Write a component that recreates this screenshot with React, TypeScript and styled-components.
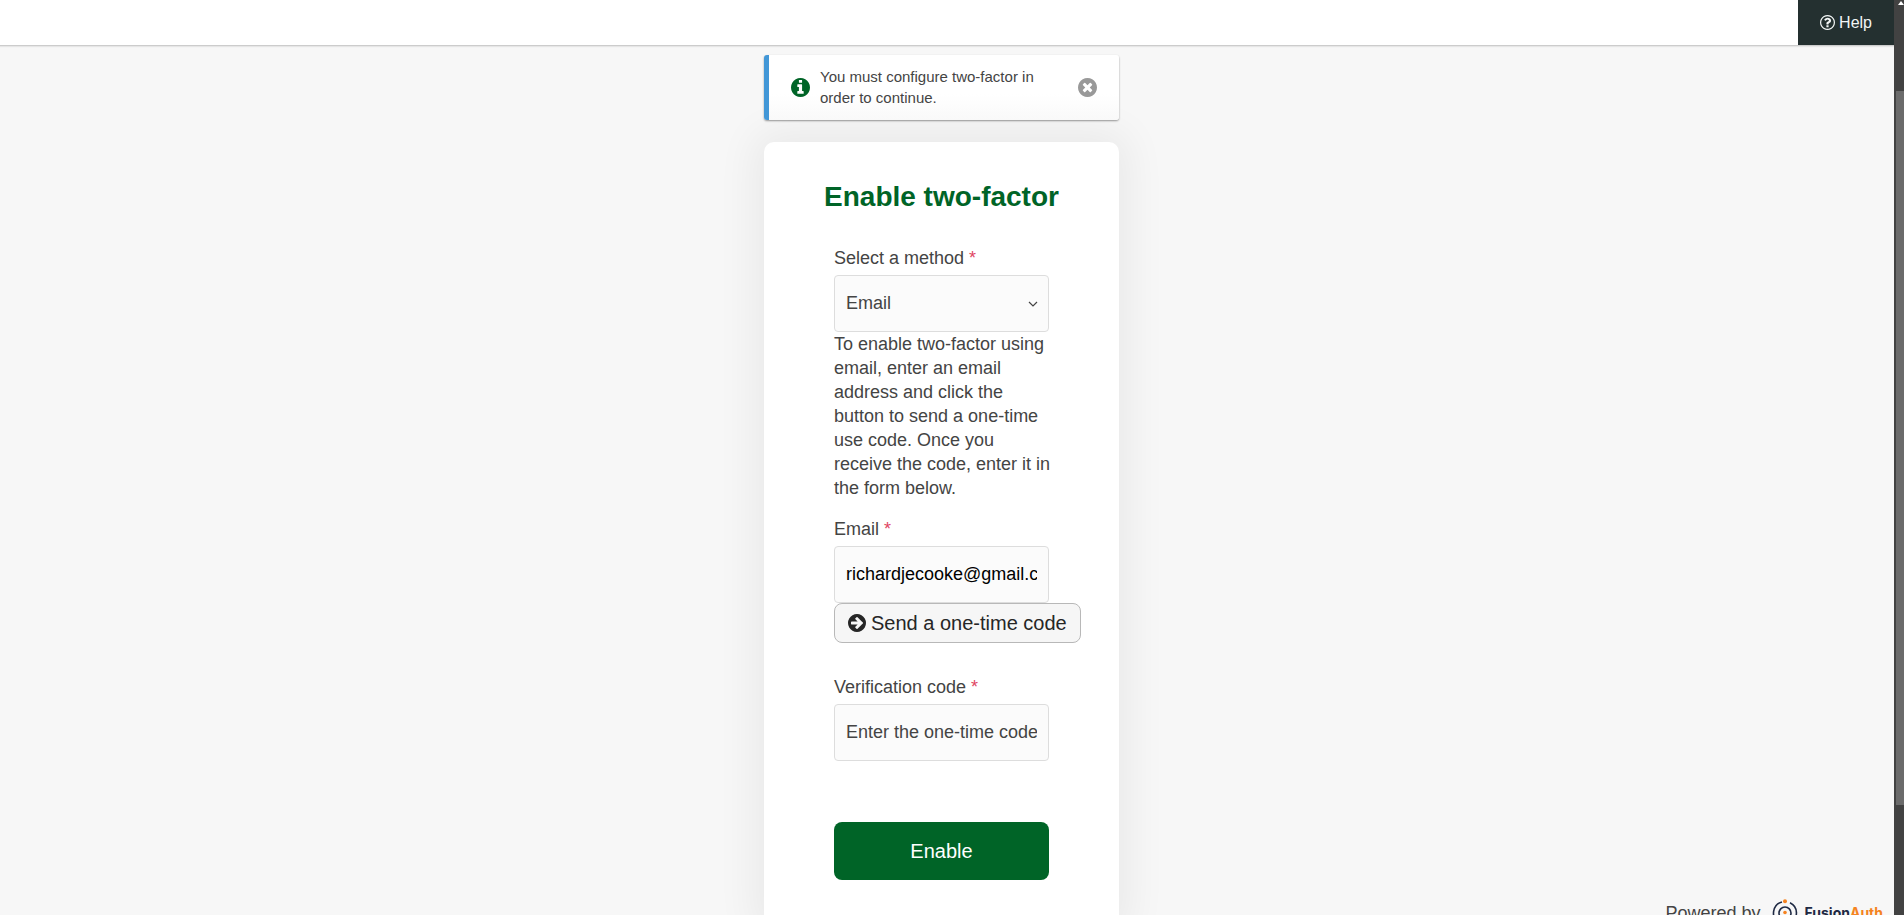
import React from "react";
import styled, { createGlobalStyle } from "styled-components";

const GlobalStyle = createGlobalStyle`
  *, *::before, *::after { box-sizing: border-box; }
  body {
    margin: 0;
    background: #f7f7f7;
    color: #444;
    font: 18px/24px "Liberation Sans", Arial, sans-serif;
  }
  button, input, select { font: inherit; color: inherit; }
`;

const Frame = styled.div`
  display: grid;
  grid-template-columns: minmax(0, 1fr) 10px;
  height: 100vh;
  overflow: hidden;
`;

const Page = styled.div`
  overflow: hidden;
`;

const Header = styled.header`
  display: flex;
  justify-content: flex-end;
  background: #fff;
  border-bottom: 1px solid #ccc;
  box-shadow: 0 1px 1px #e6e6e6;
`;

const HelpLink = styled.a`
  display: flex;
  align-items: center;
  gap: 4px;
  height: 45px;
  padding: 0 22px;
  background: #243030;
  color: #f2f5f5;
  font-size: 16px;
  text-decoration: none;
`;

const Main = styled.main`
  display: grid;
  grid-template-columns: minmax(0, 1fr) 355px minmax(0, 1fr);
  padding: 9px 11px 0 0;
`;

const Column = styled.div`
  grid-column: 2;
  display: flex;
  flex-direction: column;
  gap: 22px;
`;

const Alert = styled.section`
  display: flex;
  align-items: center;
  gap: 10px;
  z-index: 1;
  height: 65px;
  padding: 0 22px;
  border-left: 5px solid #4297d7;
  border-radius: 3px;
  background: linear-gradient(#fff 60%, #f9f9f9);
  box-shadow: 0 1px 2px rgba(0, 0, 0, 0.4);
  font-size: 15px;
  line-height: 21px;
`;

const AlertText = styled.p`
  flex: 1;
  margin: 0;
  padding: 0 30px 2px 0;
`;

const Tinted = styled.span<{ $color: string }>`
  display: flex;
  color: ${(p) => p.$color};
`;

const DismissButton = styled.button`
  display: flex;
  padding: 0;
  border: 0;
  background: none;
  color: #999;
`;

const Card = styled.form`
  display: flex;
  flex-direction: column;
  padding: 39px 70px 47px;
  border-radius: 10px;
  background: #fff;
  box-shadow: 0 0 40px 10px rgba(0, 0, 0, 0.06);
`;

const Title = styled.h1`
  margin: 0 -20px 33px;
  color: #006427;
  font-size: 28px;
  line-height: 32px;
  text-align: center;
`;

const Label = styled.label`
  margin-bottom: 5px;
`;

const Required = styled.span`
  color: #e04562;
`;

const controlHeight = "57px";

const TextInput = styled.input`
  width: 100%;
  height: ${controlHeight};
  padding: 0 11px;
  border: 1px solid #ddd;
  border-radius: 4px;
  background: #fbfbfb;
  &::placeholder { color: #444; opacity: 1; }
`;

const EmailInput = styled(TextInput)`
  color: #000;
`;

const SelectBox = styled.div`
  display: grid;
  align-items: center;
`;

const Select = styled.select`
  grid-area: 1 / 1;
  appearance: none;
  width: 100%;
  height: ${controlHeight};
  padding: 0 30px 2px 11px;
  border: 1px solid #ddd;
  border-radius: 4px;
  background: #fbfbfb;
`;

const Chevron = styled.svg`
  grid-area: 1 / 1;
  justify-self: end;
  margin-right: 11px;
  pointer-events: none;
`;

const HelpText = styled.p`
  margin: 0 -6px 17px 0;
`;

const SendButton = styled.button`
  display: flex;
  align-items: center;
  align-self: flex-start;
  gap: 5px;
  height: 40px;
  margin-bottom: 32px;
  padding: 0 13px;
  border: 1px solid #b8b8b8;
  border-radius: 8px;
  background: #f6f6f6;
  color: #262626;
  font-size: 20px;
  white-space: nowrap;
`;

const SubmitButton = styled.button`
  height: 58px;
  margin-top: 61px;
  border: 0;
  border-radius: 8px;
  background: #006427;
  color: #fff;
  font-size: 20px;
`;

const Footer = styled.footer`
  display: flex;
  align-items: center;
  align-self: end;
  justify-self: end;
  gap: 11px;
`;

const Brand = styled.a`
  display: flex;
  align-items: center;
  gap: 7px;
  color: #1f2a44;
  font: 700 14px/20px Inter, sans-serif;
  text-decoration: none;
`;

const BrandAccent = styled.span`
  color: #f58320;
`;

const ScrollTrack = styled.div`
  display: flex;
  flex-direction: column;
  align-items: flex-end;
  background: #424242;
`;

const ScrollArrow = styled.svg`
  margin-bottom: 86px;
`;

const ScrollThumb = styled.div`
  width: 8px;
  height: 78%;
  background: #6b6b6b;
`;

const disc =
  "q0 209-103 385.5t-279.5 279.5-385.5 103-385.5-103-279.5-279.5-103-385.5 103-385.5 279.5-279.5 385.5-103 385.5 103 279.5 279.5 103 385.5z";

const glyphs = {
  info:
    "M1152 1376v-160q0-14-9-23t-23-9h-96v-512q0-14-9-23t-23-9h-320q-14 0-23 9t-9 23v160q0 14 9 23t23 9h96v320h-96q-14 0-23 9t-9 23v160q0 14 9 23t23 9h448q14 0 23-9t9-23zm-128-896v-160q0-14-9-23t-23-9h-192q-14 0-23 9t-9 23v160q0 14 9 23t23 9h192q14 0 23-9t9-23zm640 416" +
    disc,
  close:
    "M1277 1122q0-26-19-45l-181-181 181-181q19-19 19-45 0-27-19-46l-90-90q-19-19-46-19-26 0-45 19l-181 181-181-181q-19-19-45-19-27 0-46 19l-90 90q-19 19-19 46 0 26 19 45l181 181-181 181q-19 19-19 45 0 27 19 46l90 90q19 19 46 19 26 0 45-19l181-181 181 181q19 19 45 19 27 0 46-19l90-90q19-19 19-46zm387-226" +
    disc,
  arrow:
    "M1413 896q0-27-18-45l-91-91-362-362q-18-18-45-18t-45 18l-91 91q-18 18-18 45t18 45l189 189h-502q-26 0-45 19t-19 45v128q0 26 19 45t45 19h502l-189 189q-19 19-19 45t19 45l91 91q18 18 45 18t45-18l362-362 91-91q18-18 18-45zm251 0" +
    disc,
  question:
    "M1008 1200v160q0 14-9 23t-23 9h-160q-14 0-23-9t-9-23v-160q0-14 9-23t23-9h160q14 0 23 9t9 23zm256-496q0 50-15 90t-45.5 69-52 44-59.5 36q-32 18-46.5 28t-26 24-11.5 29v32q0 14-9 23t-23 9h-160q-14 0-23-9t-9-23v-68q0-35 10.5-64.5t24-47.5 39-35.5 41-25.5 44.5-21q53-25 75-43t22-49q0-42-43.5-71.5t-95.5-29.5q-56 0-95 27-29 20-80 83-9 12-25 12-11 0-19-6l-108-82q-10-7-12-20t5-23q122-192 349-192 129 0 238.5 89.5t109.5 214.5zm-368-448q-130 0-248.5 51t-204 136.5-136.5 204-51 248.5 51 248.5 136.5 204 204 136.5 248.5 51 248.5-51 204-136.5 136.5-204 51-248.5-51-248.5-136.5-204-204-136.5-248.5-51zm768 640" +
    disc,
};

function Icon({ name, size }: { name: keyof typeof glyphs; size: number }) {
  return (
    <svg
      width={size}
      height={size}
      viewBox="128 128 1536 1536"
      fill="currentColor"
      fillRule={name === "arrow" ? "evenodd" : "nonzero"}
      aria-hidden="true"
    >
      <path d={glyphs[name]} />
    </svg>
  );
}

function RequiredLabel({ htmlFor, text }: { htmlFor: string; text: string }) {
  return (
    <Label htmlFor={htmlFor}>
      {text} <Required>*</Required>
    </Label>
  );
}

function FusionMark() {
  return (
    <svg width="26" height="28" viewBox="0 0 26 28" fill="none" aria-hidden="true">
      <path d="M10 2.9A11.5 11.5 0 0 0 7 23.8" stroke="#1f2a44" strokeWidth="1.6" />
      <path d="M18 3.7A11.5 11.5 0 0 1 16 25.1" stroke="#1f2a44" strokeWidth="1.6" />
      <path d="M9 18.5A6 6 0 1 1 17 18.5" stroke="#1f2a44" strokeWidth="1.6" />
      <circle cx="13" cy="2.2" r="2" fill="#f58320" />
      <circle cx="13" cy="13.5" r="1.8" fill="#f58320" />
    </svg>
  );
}

export default function App() {
  return (
    <>
      <GlobalStyle />
      <Frame>
        <Page>
          <Header>
            <HelpLink href="#help">
              <Icon name="question" size={15} />
              Help
            </HelpLink>
          </Header>
          <Main>
            <Column>
              <Alert role="status">
                <Tinted $color="#006427">
                  <Icon name="info" size={19} />
                </Tinted>
                <AlertText>You must configure two-factor in order to continue.</AlertText>
                <DismissButton type="button" aria-label="Dismiss">
                  <Icon name="close" size={19} />
                </DismissButton>
              </Alert>
              <Card onSubmit={(e) => e.preventDefault()}>
                <Title>Enable two-factor</Title>
                <RequiredLabel htmlFor="method" text="Select a method" />
                <SelectBox>
                  <Select id="method" defaultValue="email">
                    <option value="email">Email</option>
                  </Select>
                  <Chevron width="10" height="10" viewBox="0 0 10 10" fill="none" aria-hidden="true">
                    <path d="M1 3L5 7L9 3" stroke="#444" strokeWidth="1.2" />
                  </Chevron>
                </SelectBox>
                <HelpText>
                  To enable two-factor using email, enter an email address and click the button to
                  send a one-time use code. Once you receive the code, enter it in the form below.
                </HelpText>
                <RequiredLabel htmlFor="email" text="Email" />
                <EmailInput id="email" type="text" defaultValue="richardjecooke@gmail.com" />
                <SendButton type="button">
                  <Icon name="arrow" size={18} />
                  Send a one-time code
                </SendButton>
                <RequiredLabel htmlFor="code" text="Verification code" />
                <TextInput id="code" type="text" placeholder="Enter the one-time code" />
                <SubmitButton type="submit">Enable</SubmitButton>
              </Card>
            </Column>
            <Footer>
              Powered by
              <Brand href="#fusionauth">
                <FusionMark />
                <span>
                  Fusion<BrandAccent>Auth</BrandAccent>
                </span>
              </Brand>
            </Footer>
          </Main>
        </Page>
        <ScrollTrack aria-hidden="true">
          <ScrollArrow width="6" height="5" viewBox="0 0 6 5">
            <path d="M0 5L3 1L6 5Z" fill="#fff" />
          </ScrollArrow>
          <ScrollThumb />
        </ScrollTrack>
      </Frame>
    </>
  );
}
